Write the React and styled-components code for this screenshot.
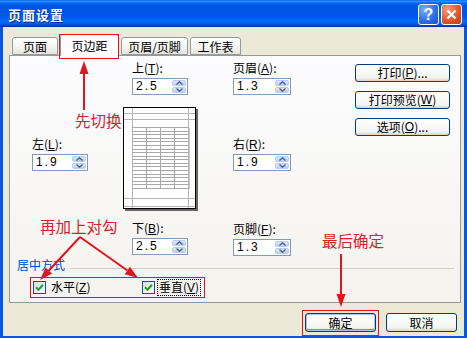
import React from "react";
import styled, { createGlobalStyle } from "styled-components";

const GlobalStyle = createGlobalStyle`
    html, body {
        margin: 0;
        padding: 0;
        background: #fff;
    }
    body {
        font-family: "Noto Sans CJK SC", "Liberation Sans", sans-serif;
        font-size: 12px;
        color: #000;
    }
`;

const RED = "#E2141C";

const Window = styled.div`
    position: relative;
    width: 467px;
    height: 338px;
    display: flex;
    flex-direction: column;
    background: #0755E2;
    overflow: hidden;
`;

const TitleBar = styled.div`
    height: 27px;
    flex: none;
    box-sizing: border-box;
    display: flex;
    align-items: flex-start;
    padding: 4px 5px 0 8px;
    background: linear-gradient(#0058EE 0%, #3593FF 4%, #288EFF 6%, #127DFF 8%, #036FFC 10%,
        #0262EE 14%, #0057E5 20%, #0054E3 24%, #0055EB 56%, #005BF5 66%, #026AFE 76%,
        #0062EF 86%, #0052D6 92%, #0040AB 96%, #003092 100%);
`;

const Title = styled.div`
    flex: 1;
    margin-top: 2px;
    color: #fff;
    font-weight: bold;
    font-size: 13px;
    line-height: 18px;
    letter-spacing: 1px;
    text-shadow: 1px 1px 0 #0A2A8C;
`;

const CaptionButton = styled.div`
    width: 21px;
    height: 21px;
    box-sizing: border-box;
    margin-left: 2px;
    border: 1px solid #fff;
    border-radius: 3px;
    display: flex;
    align-items: center;
    justify-content: center;
    color: #fff;
    font: bold 16px "Liberation Sans", sans-serif;
    background: ${p => p.$close
        ? "radial-gradient(circle at 30% 25%, #F0A080, #E2562A 55%, #C03A12)"
        : "radial-gradient(circle at 30% 25%, #7FB0FF, #2E6FEA 55%, #1A4FCF)"};
`;

const Body = styled.div`
    flex: 1;
    margin: 0 3px 3px;
    padding: 7px 3px 0 6px;
    background: #ECE9D8;
    display: flex;
    flex-direction: column;
`;

const TabRow = styled.div`
    display: flex;
    align-items: flex-end;
    gap: 2px;
    height: 21px;
    margin-left: 3px;
    position: relative;
    z-index: 1;
`;

const Tab = styled.div`
    position: relative;
    width: ${p => p.$width}px;
    height: ${p => (p.$active ? 22 : 18)}px;
    margin-bottom: ${p => (p.$active ? -1 : 0)}px;
    box-sizing: border-box;
    border: 1px solid #919B9C;
    border-bottom: ${p => (p.$active ? "none" : "1px solid #919B9C")};
    border-radius: 3px 3px 0 0;
    background: ${p => (p.$active ? "#FCFCFE" : "linear-gradient(#FFFFFF, #F3F3EF 60%, #E4E3DC)")};
    display: flex;
    align-items: center;
    justify-content: center;
    padding-top: ${p => (p.$active ? 0 : 1)}px;
    font-size: 12px;
    line-height: 14px;

    &::after {
        content: "";
        display: ${p => (p.$marked ? "block" : "none")};
        position: absolute;
        left: -2px;
        right: -1px;
        top: -1px;
        bottom: -3px;
        border: 1px solid ${RED};
    }
`;

const Panel = styled.div`
    height: 248px;
    box-sizing: border-box;
    border: 1px solid #919B9C;
    background: linear-gradient(#FCFCFE, #F4F3EE);
    padding: 4px 6px 0 7px;
    display: flex;
    flex-direction: column;
`;

const Columns = styled.div`
    display: flex;
    margin-left: 15px;
`;

const Column = styled.div`
    width: ${p => p.$width}px;
    margin-left: ${p => p.$gap || 0}px;
    display: flex;
    flex-direction: column;
    align-items: ${p => (p.$center ? "center" : "flex-start")};
`;

const Field = styled.div`
    margin-top: ${p => p.$top || 0}px;
    display: flex;
    flex-direction: column;
`;

const Label = styled.div`
    line-height: 16px;
    height: 16px;
    margin-bottom: 2px;
    white-space: nowrap;

    u {
        font-family: "Liberation Sans", sans-serif;
    }
`;

const SpinBox = styled.div`
    width: ${p => p.$width}px;
    height: 17px;
    box-sizing: border-box;
    border: 1px solid #7F9DB9;
    background: #fff;
    display: flex;
    align-items: center;
    justify-content: space-between;
    padding: 0 1px 0 3px;
`;

const SpinValue = styled.span`
    font-family: "Liberation Sans", sans-serif;
    font-size: 12px;
    letter-spacing: 2px;
    line-height: 15px;
`;

const SpinButtons = styled.div`
    width: 14px;
    height: 13px;
    display: flex;
    flex-direction: column;
    gap: 1px;
`;

const SpinHalf = styled.div`
    flex: 1;
    border: 1px solid #B7CBF5;
    border-radius: 2px;
    background: linear-gradient(#DCE6FC, #BCCEF8);
    display: flex;
    align-items: center;
    justify-content: center;
`;

const Preview = styled.div`
    margin-top: 12px;
    margin-bottom: 9px;
    height: 104px;
    align-self: flex-start;
`;

const SideButtons = styled.div`
    margin-top: 4px;
    display: flex;
    flex-direction: column;
    gap: 9px;
`;

const Button = styled.div`
    width: ${p => p.$width}px;
    height: ${p => p.$height || 18}px;
    box-sizing: border-box;
    border: 1px solid #003C74;
    border-radius: 3px;
    background: linear-gradient(#FFFFFF, #F4F4F0 80%, #D8D3C8);
    box-shadow: ${p => (p.$default ? "inset 0 0 0 1px #A9C4F0, inset 0 -1px 0 1px #6A93DE" : "none")};
    display: flex;
    align-items: center;
    justify-content: center;
    font-size: 12px;
    line-height: 14px;
    white-space: nowrap;

    u {
        font-family: "Liberation Sans", sans-serif;
    }
`;

const GroupHeader = styled.div`
    margin-top: 2px;
    display: flex;
    align-items: flex-start;
    height: 14px;
`;

const GroupTitle = styled.div`
    color: #0046D5;
    line-height: 14px;
`;

const GroupLine = styled.div`
    flex: 1;
    height: 1px;
    margin: 10px 0 0 5px;
    background: #D0D0BF;
`;

const CheckRow = styled.div`
    margin: 5px 0 0 13px;
    width: 175px;
    height: 21px;
    box-sizing: border-box;
    border: 1px solid ${RED};
    padding: 0 2px;
    display: flex;
    align-items: center;
`;

const CheckItem = styled.div`
    width: ${p => (p.$width ? `${p.$width}px` : "auto")};
    display: flex;
    align-items: center;
`;

const CheckBox = styled.div`
    width: 13px;
    height: 13px;
    box-sizing: border-box;
    border: 1px solid #1C5180;
    background: linear-gradient(135deg, #DCDCD7, #FFFFFF);
    display: flex;
    align-items: center;
    justify-content: center;
`;

const CheckLabel = styled.span`
    margin-left: ${p => (p.$focus ? 2 : 3)}px;
    padding: 0 1px;
    line-height: 14px;
    border: 1px dotted ${p => (p.$focus ? "#000" : "transparent")};

    u {
        font-family: "Liberation Sans", sans-serif;
    }
`;

const Footer = styled.div`
    margin-top: 7px;
    padding-right: 4px;
    display: flex;
    justify-content: flex-end;
    align-items: flex-start;
    gap: 7px;
`;

const Marked = styled.div`
    border: 1px solid ${RED};
    padding: 2px 2px 3px;
`;

const ButtonSlot = styled.div`
    padding-top: 3px;
`;

const Note = styled.div`
    position: absolute;
    left: ${p => p.$x}px;
    top: ${p => p.$y}px;
    color: #D8222A;
    font-size: 15.5px;
    line-height: 18px;
    white-space: nowrap;
`;

const Overlay = styled.svg`
    position: absolute;
    left: 0;
    top: 0;
    pointer-events: none;
`;

function Spinner({ value, width = 56 }) {
    return (
        <SpinBox $width={width}>
            <SpinValue>{value}</SpinValue>
            <SpinButtons>
                <SpinHalf>
                    <svg width="7" height="4" viewBox="0 0 7 4">
                        <path d="M0.5 3.5 L3.5 0.8 L6.5 3.5" fill="none" stroke="#4D6185" strokeWidth="1.4" />
                    </svg>
                </SpinHalf>
                <SpinHalf>
                    <svg width="7" height="4" viewBox="0 0 7 4">
                        <path d="M0.5 0.5 L3.5 3.2 L6.5 0.5" fill="none" stroke="#4D6185" strokeWidth="1.4" />
                    </svg>
                </SpinHalf>
            </SpinButtons>
        </SpinBox>
    );
}

function MarginField({ name, hotkey, value, top, width }) {
    return (
        <Field $top={top}>
            <Label>{name}(<u>{hotkey}</u>):</Label>
            <Spinner value={value} width={width} />
        </Field>
    );
}

function PagePreview() {
    const rows = [];
    for (let i = 0; i <= 17; i++) {
        const y = Math.round(20 + (61 * i) / 17) + 0.5;
        rows.push(<line key={"r" + i} x1="9.5" y1={y} x2="65.5" y2={y} stroke="#A8A8A8" />);
    }
    const cols = [23.5, 37.5, 51.5];
    return (
        <svg width="75" height="104" viewBox="0 0 75 104">
            <rect x="2" y="2" width="73" height="102" fill="#666" />
            <rect x="0.5" y="0.5" width="72" height="101" fill="#fff" stroke="#000" />
            <line x1="9.5" y1="1" x2="9.5" y2="101" stroke="#B4B4B4" />
            <line x1="65.5" y1="1" x2="65.5" y2="101" stroke="#B4B4B4" />
            {[6.5, 12.5, 91.5, 99.5].map(y => (
                <line key={y} x1="1" y1={y} x2="72" y2={y} stroke="#B4B4B4" />
            ))}
            {rows}
            {cols.map(x => (
                <line key={x} x1={x} y1="20.5" x2={x} y2="81.5" stroke="#A8A8A8" />
            ))}
            <line x1="66.5" y1="21" x2="66.5" y2="82" stroke="#C8C8C8" />
        </svg>
    );
}

function Check() {
    return (
        <svg width="9" height="9" viewBox="0 0 9 9">
            <path d="M1 4.2 L3.5 6.7 L8 1.8" fill="none" stroke="#21A121" strokeWidth="2" />
        </svg>
    );
}

function Arrow({ from, to }) {
    const dx = to[0] - from[0];
    const dy = to[1] - from[1];
    const len = Math.hypot(dx, dy);
    const ux = dx / len;
    const uy = dy / len;
    const bx = to[0] - ux * 13;
    const by = to[1] - uy * 13;
    const px = -uy * 4.5;
    const py = ux * 4.5;
    const head = `${to[0]},${to[1]} ${bx + px},${by + py} ${bx - px},${by - py}`;
    return (
        <g>
            <line x1={from[0]} y1={from[1]} x2={bx} y2={by} stroke={RED} strokeWidth="2" />
            <polygon points={head} fill={RED} />
        </g>
    );
}

export default function App() {
    return (
        <>
            <GlobalStyle />
            <Window>
                <TitleBar>
                    <Title>页面设置</Title>
                    <CaptionButton>?</CaptionButton>
                    <CaptionButton $close>
                        <svg width="11" height="11" viewBox="0 0 11 11">
                            <path d="M1.5 1.5 L9.5 9.5 M9.5 1.5 L1.5 9.5" stroke="#fff" strokeWidth="2.2" />
                        </svg>
                    </CaptionButton>
                </TitleBar>
                <Body>
                    <TabRow>
                        <Tab $width={46}>页面</Tab>
                        <Tab $width={59} $active $marked>页边距</Tab>
                        <Tab $width={67}>页眉/页脚</Tab>
                        <Tab $width={51}>工作表</Tab>
                    </TabRow>
                    <Panel>
                        <Columns>
                            <Column $width={56}>
                                <MarginField name="左" hotkey="L" value="1.9" top={76} />
                            </Column>
                            <Column $width={74} $gap={35} $center>
                                <MarginField name="上" hotkey="T" value="2.5" />
                                <Preview>
                                    <PagePreview />
                                </Preview>
                                <MarginField name="下" hotkey="B" value="2.5" />
                            </Column>
                            <Column $width={58} $gap={36}>
                                <MarginField name="页眉" hotkey="A" value="1.3" width={58} />
                                <MarginField name="右" hotkey="R" value="1.9" top={41} width={58} />
                                <MarginField name="页脚" hotkey="F" value="1.3" top={50} width={58} />
                            </Column>
                            <Column $width={95} $gap={64}>
                                <SideButtons>
                                    <Button $width={95}>打印(<u>P</u>)...</Button>
                                    <Button $width={95}>打印预览(<u>W</u>)</Button>
                                    <Button $width={95}>选项(<u>O</u>)...</Button>
                                </SideButtons>
                            </Column>
                        </Columns>
                        <GroupHeader>
                            <GroupTitle>居中方式</GroupTitle>
                            <GroupLine />
                        </GroupHeader>
                        <CheckRow>
                            <CheckItem $width={109}>
                                <CheckBox><Check /></CheckBox>
                                <CheckLabel>水平(<u>Z</u>)</CheckLabel>
                            </CheckItem>
                            <CheckItem>
                                <CheckBox><Check /></CheckBox>
                                <CheckLabel $focus>垂直(<u>V</u>)</CheckLabel>
                            </CheckItem>
                        </CheckRow>
                    </Panel>
                    <Footer>
                        <Marked>
                            <Button $width={71} $height={19} $default>确定</Button>
                        </Marked>
                        <ButtonSlot>
                            <Button $width={71} $height={19}>取消</Button>
                        </ButtonSlot>
                    </Footer>
                </Body>

                <Note $x={75} $y={111}>先切换</Note>
                <Note $x={40} $y={217}>再加上对勾</Note>
                <Note $x={322} $y={231}>最后确定</Note>
                <Overlay width="467" height="338">
                    <Arrow from={[84, 110]} to={[84, 61]} />
                    <Arrow from={[80, 237]} to={[40, 280]} />
                    <Arrow from={[80, 237]} to={[138, 278]} />
                    <Arrow from={[341, 254]} to={[341, 307]} />
                </Overlay>
            </Window>
        </>
    );
}
